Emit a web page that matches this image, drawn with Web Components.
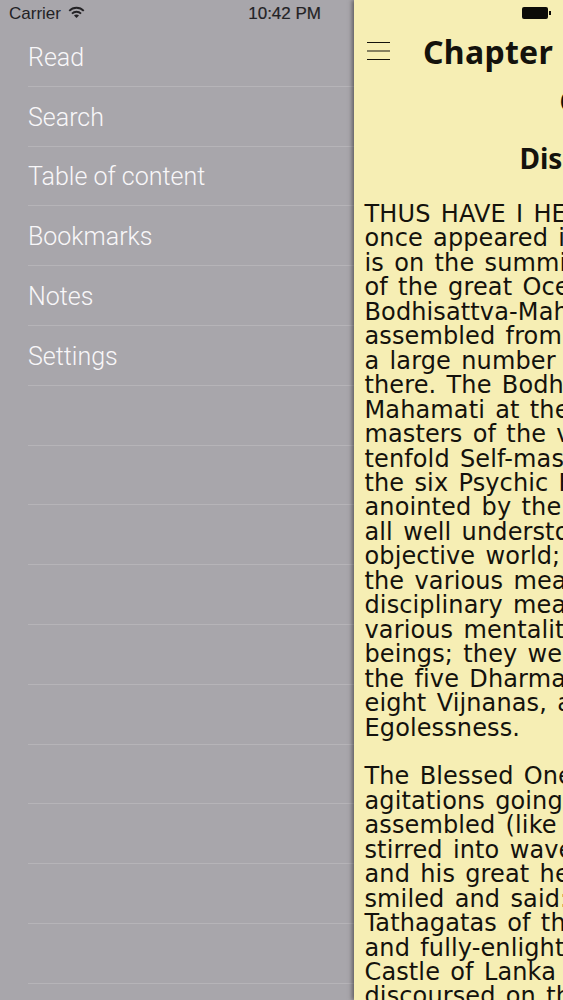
<!DOCTYPE html>
<html lang="en">
<head>
<meta charset="UTF-8">
<title>Reader</title>
<style>
  html, body { margin: 0; height: 100%; background: #a8a6ab; }
  body { overflow: hidden; }
</style>
</head>
<body>
<reader-app>
  <side-menu slot="menu">
    <menu-row>Read</menu-row>
    <menu-row>Search</menu-row>
    <menu-row>Table of content</menu-row>
    <menu-row>Bookmarks</menu-row>
    <menu-row>Notes</menu-row>
    <menu-row>Settings</menu-row>
    <menu-row></menu-row><menu-row></menu-row><menu-row></menu-row><menu-row></menu-row><menu-row></menu-row>
    <menu-row></menu-row><menu-row></menu-row><menu-row></menu-row><menu-row></menu-row><menu-row></menu-row>
  </side-menu>
  <chapter-view slot="page">
    <h-line slot="title" level="1">Chapter 1</h-line>
    <h-line level="2">Chapter 1</h-line>
    <h-line level="3">Discourse</h-line>
    <text-para>
      <div>THUS HAVE I HEARD. The Blessed One</div>
      <div>once appeared in the Castle of Lanka</div>
      <div>is on the summit of Mount Malaya</div>
      <div>of the great Ocean, accompanied by</div>
      <div>Bodhisattva-Mahasattvas who had</div>
      <div>assembled from various Buddha-lands</div>
      <div>a large number of Bhikshus gathered</div>
      <div>there. The Bodhisattva-Mahasattvas</div>
      <div>Mahamati at their head were all</div>
      <div>masters of the various Samadhis, the</div>
      <div>tenfold Self-mastery, and</div>
      <div>the six Psychic Faculties, having been</div>
      <div>anointed by the hands of the Buddha;</div>
      <div>all well understood the significance of the</div>
      <div>objective world; they all knew how</div>
      <div>the various meanings and</div>
      <div>disciplinary measures to</div>
      <div>various mentalities and behaviours of</div>
      <div>beings; they were thoroughly versed in</div>
      <div>the five Dharmas, the three Svabhavas, the</div>
      <div>eight Vijnanas, and the twofold</div>
      <div>Egolessness.</div>
    </text-para>
    <text-para>
      <div>The Blessed One, knowing of the</div>
      <div>agitations going on in the minds of those</div>
      <div>assembled (like the ocean</div>
      <div>stirred into waves by the wind),</div>
      <div>and his great heart moved by compassion,</div>
      <div>smiled and said: In days of old the</div>
      <div>Tathagatas of the past who were Arhats</div>
      <div>and fully-enlightened Ones came to the</div>
      <div>Castle of Lanka on Mount Malaya and</div>
      <div>discoursed on the Truth</div>
    </text-para>
  </chapter-view>
</reader-app>

<template id="reader-app-tpl">
  <style>
    :host { display: flex; width: 563px; height: 1000px; overflow: hidden; background: #a8a6ab; }
    .left { width: 354px; flex: none; }
    .right { flex: 1; min-width: 0; box-shadow: -2px 0 4px rgba(40, 38, 40, .55); background: #f6eeb4; }
  </style>
  <div class="left"><slot name="menu"></slot></div>
  <div class="right"><slot name="page"></slot></div>
</template>

<template id="side-menu-tpl">
  <style>
    :host { display: block; }
    .status {
      height: 27px; padding: 1px 0 0 9px; box-sizing: border-box; display: flex; align-items: center;
      font: 17px "Liberation Sans", Arial, sans-serif; color: #232225;
    }
    .status svg { margin-left: 7px; margin-top: -4px; }
    .time { margin-left: auto; margin-right: 33px; -webkit-text-stroke: .2px #232225; }
  </style>
  <div class="status">
    <span>Carrier</span>
    <svg width="17" height="12" viewBox="0 0 17 12">
      <path d="M.6 4.2a11 11 0 0 1 15.8 0l-1.3 1.4a9.1 9.1 0 0 0-13.2 0z" fill="#232225"/>
      <path d="M3.3 6.9a7.2 7.2 0 0 1 10.4 0l-1.3 1.4a5.4 5.4 0 0 0-7.8 0z" fill="#232225"/>
      <path d="M6 9.6a3.4 3.4 0 0 1 5 0l-2.5 2.3z" fill="#232225"/>
    </svg>
    <span class="time">10:42 PM</span>
  </div>
  <slot></slot>
</template>

<template id="menu-row-tpl">
  <style>
    :host { display: block; margin-left: 28px; height: 59.8px; box-sizing: border-box; border-bottom: 1px solid #b6b4b8; }
    div {
      height: 100%; box-sizing: border-box; padding-top: 2px; display: flex; align-items: center;
      font: 300 25px Roboto, "Liberation Sans", sans-serif; color: #f8f7f9;
    }
  </style>
  <div><slot></slot></div>
</template>

<template id="chapter-view-tpl">
  <style>
    :host { display: block; height: 1000px; overflow: hidden; color: #14120c; }
    .status { height: 27px; }
    .batt { display: flex; align-items: center; padding: 7px 0 0 168px; }
    .batt i { display: block; width: 26px; height: 12px; background: #0c0b08; border-radius: 2px; }
    .batt b { display: block; width: 2px; height: 4px; margin-left: 1px; background: #0c0b08; }
    .nav { display: flex; align-items: center; height: 50px; white-space: nowrap; }
    .menu { width: 69px; flex: none; padding-left: 13px; box-sizing: border-box; }
    .menu svg { display: block; margin-top: -3px; }
    .body { padding-left: 10.5px; }
  </style>
  <div class="status"><div class="batt"><i></i><b></b></div></div>
  <div class="nav">
    <div class="menu">
      <svg width="23" height="20" viewBox="0 0 23 20">
        <path d="M0 1.5h23M0 10h23M0 18.5h23" stroke="#14120c" stroke-width="1.2"/>
      </svg>
    </div>
    <slot name="title"></slot>
  </div>
  <div class="body"><slot></slot></div>
</template>

<template id="h-line-tpl">
  <style>
    :host { display: block; white-space: nowrap; }
    :host([level="1"]) { font: 700 32px/40px "Noto Sans", sans-serif; letter-spacing: .3px; word-spacing: 6px; }
    :host([level="2"]) { font: 700 28px/30px "Noto Sans", sans-serif; padding: 9px 0 0 195px; height: 49px; }
    :host([level="3"]) { font: 700 28px/30px "Noto Sans", sans-serif; padding: 8px 0 0 155px; height: 59px; }
  </style>
  <slot></slot>
</template>

<template id="text-para-tpl">
  <style>
    :host {
      display: block; margin-bottom: 24.4px; white-space: nowrap;
      font: 24px/24.45px "DejaVu Sans", Verdana, sans-serif; letter-spacing: .12px; word-spacing: 2.5px; color: #14120c;
    }
  </style>
  <slot></slot>
</template>

<script>
  const define = (name, tplId) => {
    customElements.define(name, class extends HTMLElement {
      constructor() {
        super()
        this.attachShadow({ mode: 'open' })
        this.shadowRoot.appendChild(document.getElementById(tplId).content.cloneNode(true))
      }
    })
  }
  define('reader-app', 'reader-app-tpl')
  define('side-menu', 'side-menu-tpl')
  define('menu-row', 'menu-row-tpl')
  define('chapter-view', 'chapter-view-tpl')
  define('h-line', 'h-line-tpl')
  define('text-para', 'text-para-tpl')
</script>
</body>
</html>
